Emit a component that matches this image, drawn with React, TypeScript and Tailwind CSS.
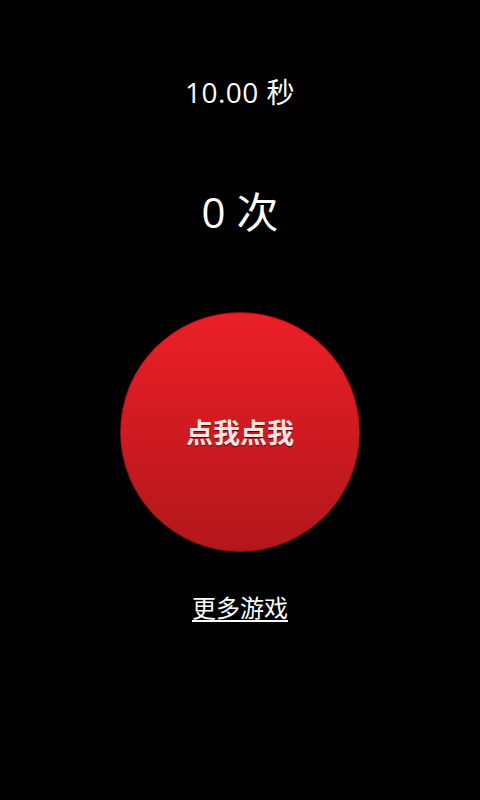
export default function App() {
  const font = { fontFamily: '"Open Sans", "Noto Sans CJK SC", sans-serif' };
  return (
    <div className="w-[480px] h-[800px] bg-black flex flex-col items-center text-white" style={font}>
      <div className="mt-[72px] h-[40px] flex items-center text-[28px] leading-none tracking-[0.5px]">10.00 秒</div>
      <div className="mt-[68px] h-[64px] flex items-center text-[42px] leading-none">0 次</div>
      <button className="mt-[68px] w-[240px] h-[240px] rounded-full bg-gradient-to-b from-[#ec1f26] to-[#b2171c] border border-[#8a1014] flex items-center justify-center">
        <span className="text-[27px] font-bold text-[#f5e4e4] leading-none [text-shadow:0_1px_1px_rgba(60,0,0,0.9)]">点我点我</span>
      </button>
      <a className="mt-[44px] text-[24px] leading-none underline underline-offset-[3px] decoration-[1.5px] text-white">更多游戏</a>
    </div>
  );
}
